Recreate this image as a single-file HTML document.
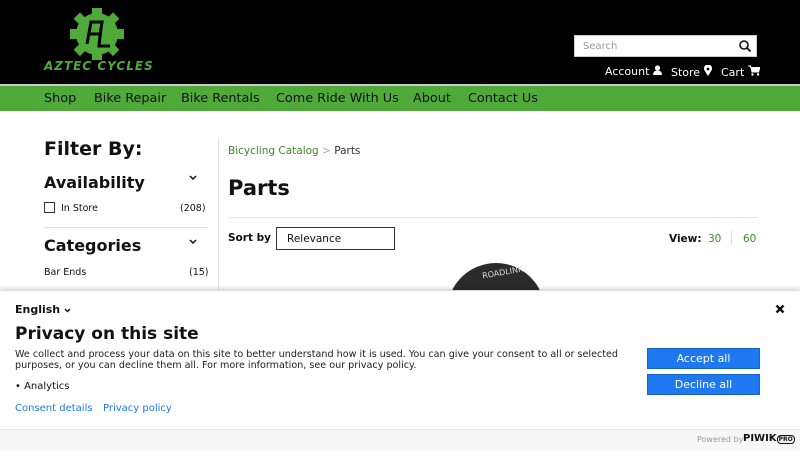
<!DOCTYPE html>
<html><head><style>
*{box-sizing:border-box;margin:0;padding:0}
body{width:800px;height:450px;overflow:hidden;font-family:"DejaVu Sans","Liberation Sans",sans-serif;background:#fff;position:relative;color:#111}
.hdr{position:absolute;top:0;left:0;width:800px;height:84px;background:#000}
.line{position:absolute;top:84px;left:0;width:800px;height:2px;background:#ccc}
.nav{position:absolute;top:86px;left:0;width:800px;height:25px;background:#4faa3a}
.nav span{position:absolute;top:5px;font-size:12.8px;color:#111}
.search{position:absolute;left:574px;top:35px;width:183px;height:22px;background:#fff;border:1px solid #ccc}
.search span{position:absolute;left:8px;top:5px;font-size:10px;color:#999}
.links{position:absolute;top:65px;color:#fff;font-size:11px}
.t{position:absolute;white-space:nowrap}
.pop{position:absolute;left:0;top:290px;width:800px;height:160px;background:#fff;box-shadow:0 -2px 4px rgba(0,0,0,.15);border-top:1px solid #ddd}
.btn{position:absolute;left:647px;width:113px;height:21px;background:#1e78f0;color:#fff;font-size:11px;text-align:center;line-height:20px;border:1px solid #1663c9}
.foot{position:absolute;left:0;top:138px;width:800px;height:22px;background:#f7f7f7;border-top:1px solid #e5e5e5}
</style></head><body>
<div class="hdr">
<svg style="position:absolute;left:70px;top:8px" width="54" height="52" viewBox="0 0 54 52"><circle cx="27" cy="26" r="21" fill="#4faa3a"/><g fill="#4faa3a"><rect x="22" y="0" width="10" height="8"/><rect x="22" y="44" width="10" height="8"/><rect x="0" y="21" width="8" height="10"/><rect x="46" y="21" width="8" height="10"/><rect x="6" y="6" width="9" height="9" transform="rotate(45 10 10)"/><rect x="39" y="6" width="9" height="9" transform="rotate(45 43 10)"/><rect x="6" y="37" width="9" height="9" transform="rotate(45 10 41)"/><rect x="39" y="37" width="9" height="9" transform="rotate(45 43 41)"/></g><path d="M17 36 L21 14 H32 L29 36 M19 26 H30 M31 20 L29 38 H40" stroke="#000" stroke-width="3" fill="none"/></svg>
<div class="t" style="left:44px;top:59px;color:#4faa3a;font-weight:bold;font-style:italic;font-size:12px;letter-spacing:1px">AZTEC CYCLES</div>
<div class="search"><span>Search</span><svg style="position:absolute;right:5px;top:4px" width="12" height="12"><circle cx="5" cy="5" r="4" stroke="#111" stroke-width="1.6" fill="none"/><path d="M8 8l3.5 3.5" stroke="#111" stroke-width="1.8"/></svg></div>
<div class="links t" style="left:605px">Account <svg width="9" height="10" viewBox="0 0 9 10"><circle cx="4.5" cy="3" r="2.6" fill="#fff"/><path d="M0 10 Q0 5.5 4.5 5.5 Q9 5.5 9 10Z" fill="#fff"/></svg></div>
<div class="links t" style="left:671px">Store <svg width="8" height="11" viewBox="0 0 8 11"><path d="M4 11 L0.6 5.5 A4 4 0 1 1 7.4 5.5Z" fill="#fff"/><circle cx="4" cy="4" r="1.4" fill="#000"/></svg></div>
<div class="links t" style="left:721px">Cart <svg width="12" height="11" viewBox="0 0 12 11"><path d="M0 1H2.5L4 7H10.5L12 2.5H3" fill="#fff" stroke="#fff" stroke-width="1"/><circle cx="4.5" cy="9.5" r="1.2" fill="#fff"/><circle cx="10" cy="9.5" r="1.2" fill="#fff"/></svg></div>
</div>
<div class="line"></div>
<div class="nav"><span style="left:44px">Shop</span><span style="left:94px">Bike Repair</span><span style="left:181px">Bike Rentals</span><span style="left:276px">Come Ride With Us</span><span style="left:413px">About</span><span style="left:468px">Contact Us</span></div>
<div class="t" style="left:44px;top:138px;font-size:19px;font-weight:bold">Filter By:</div>
<div class="t" style="left:44px;top:173px;font-size:16px;font-weight:bold">Availability</div>
<svg style="position:absolute;left:189px;top:175px" width="8" height="6"><path d="M1 1L4 4L7 1" stroke="#111" stroke-width="1.5" fill="none"/></svg>
<div style="position:absolute;left:44px;top:202px;width:11px;height:11px;border:1px solid #333"></div>
<div class="t" style="left:61px;top:203px;font-size:9.5px">In Store</div>
<div class="t" style="left:180px;top:203px;font-size:9.5px">(208)</div>
<div style="position:absolute;left:44px;top:227px;width:164px;height:1px;background:#e5e5e5"></div>
<div class="t" style="left:44px;top:236px;font-size:16px;font-weight:bold">Categories</div>
<svg style="position:absolute;left:189px;top:239px" width="8" height="6"><path d="M1 1L4 4L7 1" stroke="#111" stroke-width="1.5" fill="none"/></svg>
<div class="t" style="left:44px;top:267px;font-size:9.5px">Bar Ends</div>
<div class="t" style="left:189px;top:267px;font-size:9.5px">(15)</div>
<div style="position:absolute;left:218px;top:138px;width:1px;height:152px;background:#e5e5e5"></div>
<div class="t" style="left:228px;top:145px;font-size:10.5px;color:#3d8a2e">Bicycling Catalog <span style="color:#aaa">&gt;</span> <span style="color:#333">Parts</span></div>
<div class="t" style="left:228px;top:176px;font-size:21px;font-weight:bold">Parts</div>
<div style="position:absolute;left:228px;top:217px;width:530px;height:1px;background:#e5e5e5"></div>
<div class="t" style="left:228px;top:232px;font-size:10.5px;font-weight:bold">Sort by</div>
<div style="position:absolute;left:276px;top:227px;width:119px;height:23px;border:1px solid #333;font-size:10.5px;padding:5px 10px">Relevance</div>
<div class="t" style="left:669px;top:233px;font-size:10.5px;font-weight:bold">View:</div>
<div class="t" style="left:708px;top:233px;font-size:10.5px;color:#3d8a2e">30</div>
<div style="position:absolute;left:731px;top:231px;width:1px;height:14px;background:#ddd"></div>
<div class="t" style="left:743px;top:233px;font-size:10.5px;color:#3d8a2e">60</div>
<div style="position:absolute;left:447px;top:263px;width:98px;height:60px;border-radius:49px 49px 0 0;background:#2a2a2a"></div>
<div class="t" style="left:482px;top:268px;font-size:8px;color:#ddd;transform:rotate(-10deg)">ROADLINK</div>
<div class="pop">
<div class="t" style="left:15px;top:12px;font-size:11px;font-weight:bold">English <svg width="7" height="5"><path d="M1 1L3.5 3.5L6 1" stroke="#111" stroke-width="1.4" fill="none"/></svg></div>
<svg style="position:absolute;left:775px;top:13px" width="10" height="10"><path d="M1.5 1.5L8.5 8.5M8.5 1.5L1.5 8.5" stroke="#111" stroke-width="2.4"/></svg>
<div class="t" style="left:15px;top:33px;font-size:17px;font-weight:bold">Privacy on this site</div>
<div style="position:absolute;left:15px;top:58px;width:625px;font-size:9.6px;line-height:11px;color:#222">We collect and process your data on this site to better understand how it is used. You can give your consent to all or selected purposes, or you can decline them all. For more information, see our privacy policy.</div>
<div class="t" style="left:15px;top:90px;font-size:10px">• Analytics</div>
<div class="t" style="left:15px;top:112px;font-size:10px;color:#1e78f0">Consent details</div>
<div class="t" style="left:103px;top:112px;font-size:10px;color:#1e78f0">Privacy policy</div>
<div class="btn" style="top:57px">Accept all</div>
<div class="btn" style="top:83px">Decline all</div>
<div class="foot"><span class="t" style="left:697px;top:5px;font-size:8px;color:#999">Powered by</span><span class="t" style="left:743px;top:3px;font-size:10px;font-weight:bold;color:#111">PIWIK<span style="font-size:6px;border:1px solid #111;border-radius:4px;padding:0 1px">PRO</span></span></div>
</div>
</body></html>
